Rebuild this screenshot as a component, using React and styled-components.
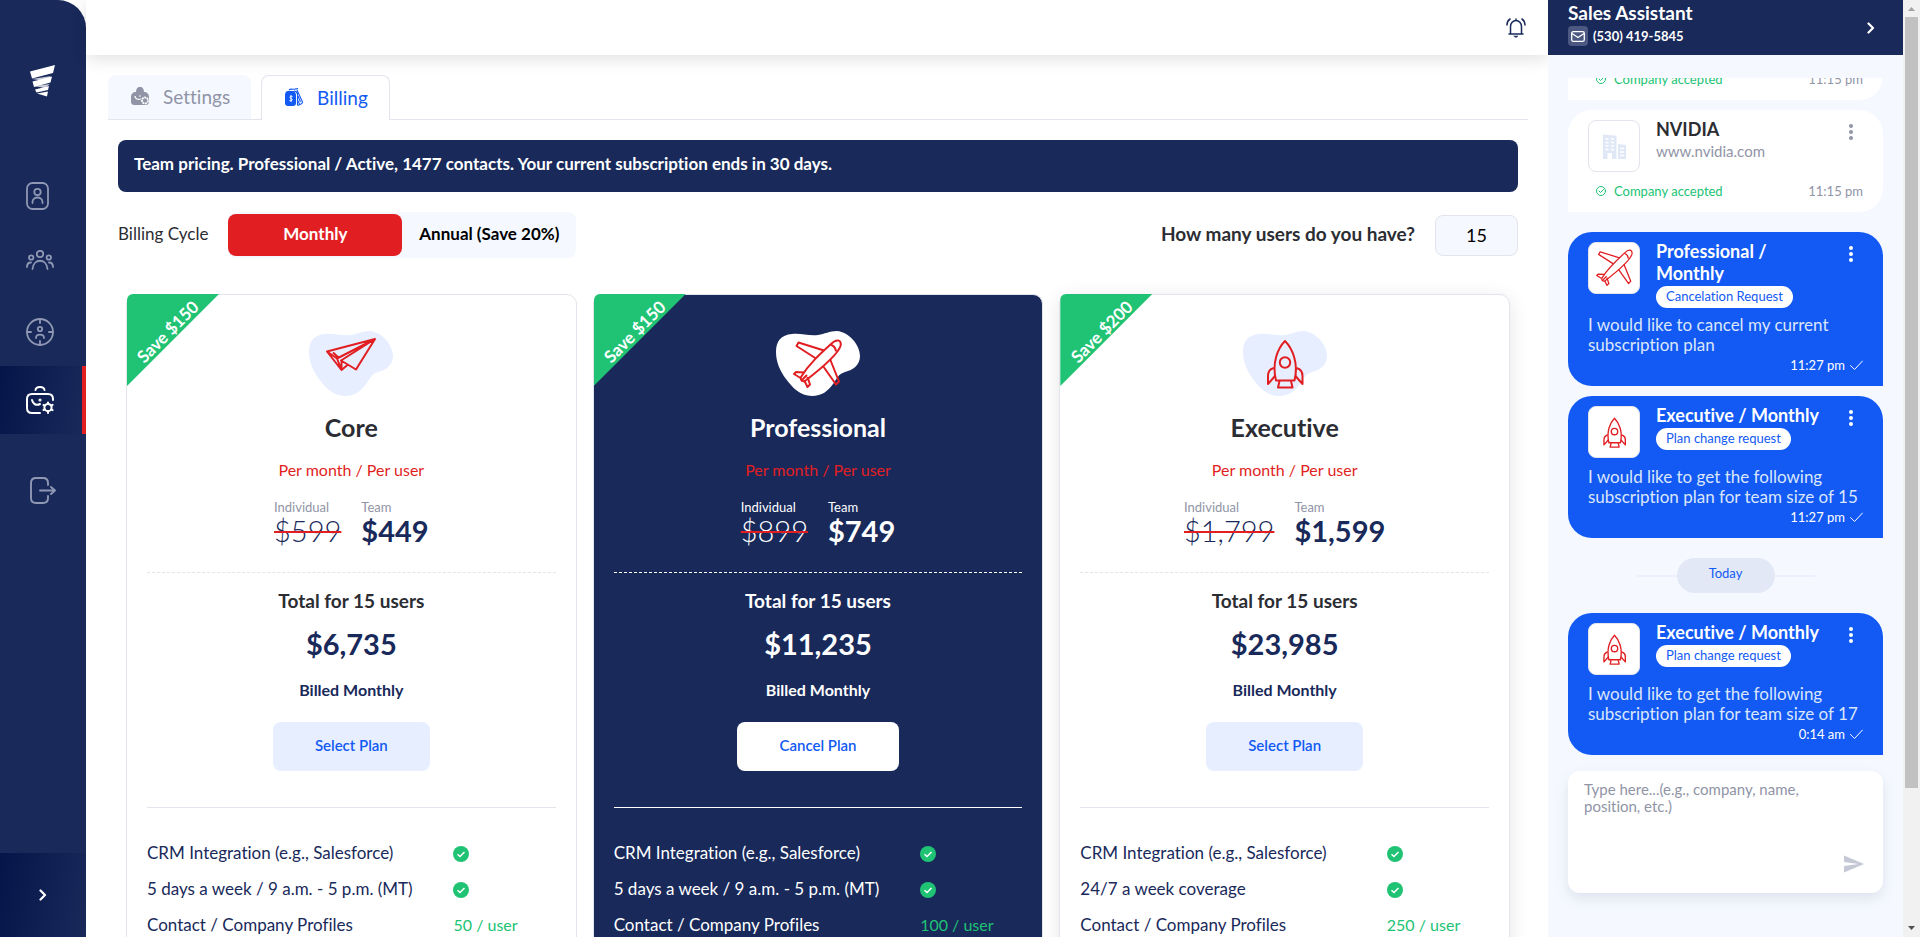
import React, { useState } from "react";
import styled, { createGlobalStyle, css } from "styled-components";

const NAVY = "#18295a";
const BLUE = "#125af3";
const RED = "#e11f22";
const GREEN = "#20c374";
const GREY = "#9094a6";
const INK = "#2b2d33";
const LINE = "#e3e4ec";
const PALE = "#f5f9ff";

const GlobalStyle = createGlobalStyle`
  * { box-sizing: border-box; }
  body { margin: 0; background: #fff; font-variant-ligatures: none; }
  body, button, input, textarea { font-family: Lato, "Open Sans", sans-serif; }
  h1, h2, h3, p, ul, dl, dd { margin: 0; padding: 0; font-weight: inherit; font-size: inherit; }
  button, textarea { font-variant-ligatures: none; }
  button { border: 0; padding: 0; background: none; color: inherit; cursor: pointer; }
  a { text-decoration: none; color: inherit; }
  svg { display: block; flex: none; }
`;

/* ---------- shell ---------- */

const Shell = styled.div`
  display: flex;
  height: 100vh;
  overflow: hidden;
`;

const Sidebar = styled.nav`
  display: flex;
  flex-direction: column;
  flex: none;
  width: 86px;
  background: ${NAVY};
  border-radius: 0 28px 0 0;
  overflow: hidden;
`;

const LogoLink = styled.a`
  height: 162px;
  padding: 65px 0 0 30px;
`;

const NavLink = styled.a`
  display: flex;
  align-items: center;
  height: 68px;
  padding-left: 26px;
  color: #8f98b3;
  ${(p) =>
    p.$active &&
    css`
      color: #fff;
      background: linear-gradient(100deg, #061549, ${NAVY});
      border-right: 4px solid ${RED};
    `}
  ${(p) =>
    p.$last &&
    css`
      margin-top: 22px;
      padding-left: 30px;
    `}
`;

const ExpandButton = styled.button`
  display: flex;
  align-items: center;
  justify-content: center;
  height: 84px;
  margin-top: auto;
  color: #fff;
  background: linear-gradient(100deg, #061549, ${NAVY});
`;

const Main = styled.main`
  flex: 1;
  min-width: 0;
  display: flex;
  flex-direction: column;
`;

const TopBar = styled.header`
  display: flex;
  flex: none;
  align-items: center;
  justify-content: flex-end;
  height: 55px;
  padding-right: 22px;
  background: #fff;
  color: ${NAVY};
  box-shadow: 0 4px 16px rgba(0, 0, 0, 0.12);
`;

const Content = styled.div`
  flex: 1;
  min-height: 0;
  overflow: hidden;
  padding: 20px 20px 0 22px;
`;

/* ---------- tabs ---------- */

const Tabs = styled.div`
  display: flex;
  gap: 10px;
  border-bottom: 1px solid ${LINE};
`;

const Tab = styled.button`
  display: flex;
  align-items: center;
  gap: 14px;
  height: 44px;
  padding: 0 21px 2px 23px;
  border-radius: 8px 8px 0 0;
  background: ${PALE};
  color: ${GREY};
  font-size: 19px;
  ${(p) =>
    p.$active &&
    css`
      height: 45px;
      margin-bottom: -1px;
      background: #fff;
      color: ${BLUE};
      border: 1px solid ${LINE};
      border-bottom: 0;
    `}
`;

/* ---------- billing ---------- */

const Billing = styled.section`
  padding: 20px 10px 0;
`;

const Banner = styled.p`
  padding: 12px 16px 16px;
  border-radius: 8px;
  background: ${NAVY};
  color: #fff;
  font-size: 17px;
  line-height: 24px;
  font-weight: 700;
`;

const Options = styled.div`
  display: flex;
  align-items: center;
  justify-content: space-between;
  margin-top: 20px;
`;

const Cycle = styled.div`
  display: flex;
  align-items: center;
  gap: 20px;
  color: ${INK};
  font-size: 17px;
`;

const Caption = styled.span`
  padding-bottom: 4px;
`;

const Toggle = styled.div`
  display: flex;
  align-items: center;
  height: 46px;
  border-radius: 8px;
  background: ${PALE};
`;

const ToggleButton = styled.button`
  height: 42px;
  width: 174px;
  padding-bottom: 3px;
  border-radius: 8px;
  font-size: 17px;
  font-weight: 700;
  color: ${(p) => (p.$on ? "#fff" : "#000")};
  background: ${(p) => (p.$on ? RED : "transparent")};
`;

const Users = styled.label`
  display: flex;
  align-items: center;
  gap: 20px;
  color: ${INK};
  font-size: 19px;
  font-weight: 700;
`;

const UsersInput = styled.input`
  width: 83px;
  height: 41px;
  border: 1px solid ${LINE};
  border-radius: 8px;
  background: ${PALE};
  font-size: 18px;
  text-align: center;
`;

const Plans = styled.div`
  display: grid;
  grid-template-columns: repeat(3, 1fr);
  gap: 16px;
  padding: 36px 8px 0;
`;

const PlanCard = styled.article`
  position: relative;
  display: flex;
  flex-direction: column;
  align-items: center;
  padding: 36px 20px 40px;
  border: 1px solid ${LINE};
  border-radius: 10px;
  background: ${(p) => (p.$dark ? NAVY : "#fff")};
  color: ${(p) => (p.$dark ? "#fff" : NAVY)};
  box-shadow: ${(p) => (p.$raised ? "0 4px 20px rgba(0, 0, 0, 0.1)" : "none")};
  --ink: ${(p) => (p.$dark ? "#fff" : INK)};
  --muted: ${(p) => (p.$dark ? "#fff" : GREY)};
  --line: ${(p) => (p.$dark ? "#fff" : LINE)};
`;

const Ribbon = styled.div`
  position: absolute;
  top: -1px;
  left: 0;
  width: 92px;
  height: 92px;
  display: flex;
  align-items: center;
  justify-content: center;
  padding: 0 10px 18px 0;
  border-top-left-radius: 6px;
  background: ${GREEN};
  clip-path: polygon(0 0, 100% 0, 0 100%);
  color: #fff;
  font-size: 17px;
  font-weight: 700;
  white-space: nowrap;

  span { transform: rotate(-45deg); }
`;

const PlanName = styled.h2`
  margin-top: 15px;
  font-size: 25px;
  line-height: 32px;
  font-weight: 700;
  color: var(--ink);
`;

const Per = styled.p`
  margin-top: 15px;
  font-size: 16px;
  line-height: 24px;
  color: ${RED};
`;

const Prices = styled.dl`
  display: flex;
  gap: 20px;
  margin-top: 17px;

  dt {
    font-size: 13px;
    line-height: 16px;
    color: var(--muted);
  }
`;

const Price = styled.dd`
  font-size: 29px;
  line-height: 32px;
  font-weight: ${(p) => (p.$old ? 300 : 700)};
  ${(p) => p.$old && css`text-decoration: line-through 2px ${RED};`}
`;

const Rule = styled.hr`
  align-self: stretch;
  width: 100%;
  margin: ${(p) => (p.$dashed ? "25px 0 0" : "36px 0 28px")};
  border: 0;
  border-top: 1px ${(p) => (p.$dashed ? "dashed" : "solid")} var(--line);
`;

const TotalLabel = styled.p`
  margin-top: 16px;
  font-size: 19px;
  line-height: 24px;
  font-weight: 700;
  color: var(--ink);
`;

const Total = styled.p`
  margin-top: 14px;
  font-size: 29px;
  line-height: 34px;
  font-weight: 700;
`;

const Billed = styled.p`
  margin: 17px 0 20px;
  font-size: 16px;
  line-height: 24px;
  font-weight: 700;
`;

const PlanButton = styled.button`
  height: 49px;
  padding: 0 42px 4px;
  border-radius: 8px;
  background: ${(p) => (p.$dark ? "#fff" : "#e7eeff")};
  color: ${BLUE};
  font-size: 15px;
  font-weight: 600;
`;

const Features = styled.ul`
  align-self: stretch;
  list-style: none;
`;

const Feature = styled.li`
  display: grid;
  grid-template-columns: 3fr 1fr;
  align-items: center;
  height: 36px;
  font-size: 17px;

  span { padding-bottom: 3px; }
`;

const Amount = styled.span`
  font-size: 16px;
  color: ${GREEN};
`;

/* ---------- assistant ---------- */

const Assistant = styled.aside`
  display: flex;
  flex-direction: column;
  flex: none;
  width: 355px;
  background: ${PALE};
  z-index: 1;
`;

const AssistantHead = styled.header`
  display: flex;
  align-items: center;
  justify-content: space-between;
  height: 55px;
  padding: 0 28px 0 20px;
  background: ${NAVY};
  color: #fff;

  h2 {
    font-size: 19px;
    line-height: 26px;
    font-weight: 700;
  }
`;

const Phone = styled.a`
  display: flex;
  align-items: center;
  gap: 5px;
  padding-bottom: 9px;
  font-size: 13px;
  line-height: 18px;
  font-weight: 700;
`;

const MailBox = styled.span`
  display: flex;
  align-items: center;
  justify-content: center;
  width: 20px;
  height: 20px;
  border-radius: 4px;
  background: #4c5880;
`;

const ChatBody = styled.div`
  display: flex;
  flex-direction: column;
  flex: 1;
  min-height: 0;
  padding: 23px 20px 44px;
`;

const Messages = styled.div`
  display: flex;
  flex-direction: column;
  justify-content: flex-end;
  flex: 1;
  min-height: 0;
  gap: 10px;
  overflow: hidden;
`;

const CompanyCard = styled.article`
  flex: none;
  padding: 10px 20px;
  border-radius: ${(p) => (p.$tail ? "0 0 24px 0" : "24px 24px 24px 0")};
  background: #fff;
`;

const RequestCard = styled.article`
  flex: none;
  margin-top: ${(p) => (p.$first ? "10px" : "0")};
  padding: 10px 20px 11px;
  border-radius: 24px 24px 0 24px;
  background: ${BLUE};
  color: #fff;
`;

const CardHead = styled.div`
  display: flex;
  align-items: flex-start;
  min-height: 54px;
  margin-bottom: 7px;
`;

const Thumb = styled.div`
  display: flex;
  align-items: center;
  justify-content: center;
  flex: none;
  width: 52px;
  height: 52px;
  border: 1px solid ${LINE};
  border-radius: 8px;
  background: #fff;
`;

const CardTitle = styled.div`
  flex: 1;
  padding: 0 8px 0 16px;
  font-size: 18px;
  line-height: 22px;
  font-weight: 700;
  color: ${(p) => (p.$ink ? INK : "#fff")};

  h3 { margin-top: -2px; padding-bottom: 2px; }

  a {
    display: block;
    font-size: 15px;
    line-height: 18px;
    font-weight: 400;
    color: ${GREY};
  }
`;

const Tag = styled.span`
  display: table;
  padding: 0 10px 2px;
  border-radius: 11px;
  background: #fff;
  color: ${BLUE};
  font-size: 13px;
  line-height: 20px;
  font-weight: 400;
`;

const MenuButton = styled.button`
  padding: 4px 10px 0 9px;
  color: ${(p) => (p.$light ? "#fff" : GREY)};
`;

const CompanyFoot = styled.div`
  display: flex;
  align-items: center;
  gap: 8px;
  padding: 0 0 1px 8px;
  font-size: 13px;
  line-height: 20px;
  color: ${GREEN};

  time {
    margin-left: auto;
    color: ${GREY};
  }
`;

const Note = styled.p`
  font-size: 17px;
  line-height: 20px;
  color: #dbe6fb;
`;

const Sent = styled.div`
  display: flex;
  align-items: center;
  justify-content: flex-end;
  gap: 5px;
  font-size: 13px;
  line-height: 20px;
`;

const DayRow = styled.div`
  display: flex;
  align-items: center;
  justify-content: center;
  flex: none;
  margin: 10px 0;

  &::before, &::after {
    content: "";
    width: 40px;
    height: 2px;
    background: #ebf0fc;
  }
`;

const Day = styled.span`
  width: 98px;
  border-radius: 18px;
  background: #e2e8f6;
  color: ${BLUE};
  font-size: 13px;
  line-height: 31px;
  padding-bottom: 4px;
  text-align: center;
`;

const Composer = styled.form`
  display: flex;
  flex-direction: column;
  align-items: flex-end;
  flex: none;
  height: 122px;
  margin-top: 16px;
  padding: 10px 19px 20px 16px;
  border-radius: 12px;
  background: #fff;
  box-shadow: 0 6px 14px rgba(24, 41, 90, 0.1);
`;

const ComposerText = styled.textarea`
  flex: 1;
  align-self: stretch;
  padding: 0 50px 0 0;
  border: 0;
  outline: 0;
  resize: none;
  background: none;
  font-size: 15px;
  line-height: 17px;
  overflow: hidden;

  &::placeholder { color: ${GREY}; opacity: 1; }
`;

const ScrollRail = styled.div`
  display: flex;
  flex-direction: column;
  align-items: center;
  justify-content: space-between;
  flex: none;
  width: 17px;
  padding: 7px 0;
  background: #f1f1f1;
`;

const ScrollThumb = styled.div`
  width: 13px;
  height: 83.5%;
  margin: 6px 0 auto;
  background: #c1c1c1;
`;

/* ---------- icons ---------- */

const Stroke = ({ w, h, width = 1.8, children }) => (
  <svg width={w} height={h} viewBox={`0 0 ${w} ${h}`} fill="none" stroke="currentColor" strokeWidth={width} strokeLinecap="round" strokeLinejoin="round" aria-hidden="true">
    {children}
  </svg>
);

const Logo = () => (
  <svg width="25" height="32" viewBox="0 0 25 32" aria-hidden="true">
    <path d="M2 14l19-3-6 5zM4 21l16-2-5 4z" fill="#c9ccd6" />
    <path d="M0 6.500L25 0l-2 8L2 13.500zM2.500 16.500L22 11.500l-1.500 6L4 22zM5 24.500l14-3.500-1 4L6.500 27.500zM7 28.500l11-2-1 5z" fill="#fff" />
  </svg>
);

const ContactIcon = () => (
  <Stroke w={23} h={28}>
    <rect x="1" y="1" width="21" height="26" rx="5.500" />
    <circle cx="11.500" cy="10" r="3.200" />
    <path d="M6.500 21v-1c0-6 10-6 10 0v1" />
  </Stroke>
);

const GroupIcon = () => (
  <Stroke w={28} h={28}>
    <circle cx="14" cy="4" r="3.200" />
    <circle cx="5.200" cy="7.500" r="2.200" />
    <circle cx="22.800" cy="7.500" r="2.200" />
    <path d="M6.500 19c1-11 14-11 15 0M1 17c0-3 1.500-4.500 4-4.500M27 17c0-3-1.500-4.500-4-4.500" />
  </Stroke>
);

const TargetIcon = () => (
  <Stroke w={28} h={28}>
    <circle cx="14" cy="14" r="13" />
    <path d="M14 1v4M14 23v4M1 14h4M23 14h4M10 20c0-4.500 8-4.500 8 0" />
    <circle cx="14" cy="11" r="2.200" />
  </Stroke>
);

const BriefcaseIcon = () => (
  <Stroke w={28} h={28} width={2}>
    <path d="M9.500 4c.5-4 8.500-4 9 0M27 14v-1c0-4-2-5-5-5H6c-3 0-5 1.500-5 5v9c0 3.500 2 5 5 5h8M6 14c1 4 4 6 8 4" />
    <circle cx="14" cy="14" r=".6" />
    <circle cx="22" cy="21.500" r="3.600" />
    <path d="M22 16.500v1M22 25.500v1.500M17.500 19l1.200.6M25.300 23.500l1.300.6M17.500 24l1.200-.6M25.300 19.500l1.300-.6" />
  </Stroke>
);

const ExitIcon = () => (
  <Stroke w={26} h={27} width={1.900}>
    <path d="M18 8V6c0-3-2-5-5-5H6C3 1 1 3 1 6v15c0 3 2 5 5 5h7c3 0 5-2 5-5v-2M10 13.500h15M21 10l4 3.500-4 3.500" />
  </Stroke>
);

const Chevron = () => (
  <Stroke w={8} h={12} width={2.200}>
    <path d="M1.500 1.500L6 6l-4.500 4.500" />
  </Stroke>
);

const BellIcon = () => (
  <Stroke w={20} h={20} width={1.500}>
    <path d="M3 16h14M4.500 16V8.500a5.500 6 0 0 1 11 0V16M10 1v1.500M4 1C2 2.300 1 4.200 1 7M16 1c2 1.300 3 3.200 3 6" />
    <path d="M8 18h4l-2 1.500z" fill="currentColor" strokeWidth=".5" />
  </Stroke>
);

const SettingsTabIcon = () => (
  <svg width="18" height="18" viewBox="0 0 18 18" aria-hidden="true">
    <path d="M5 5c0-7 8-7 8 0 3 0 5 2 5 5v4c0 3-1 4-4 4H4c-3 0-4-1-4-4v-4c0-3 2-5 5-5z" fill={GREY} />
    <path d="M4 9c0 3 3 4 6 3" fill="none" stroke="#fff" strokeWidth="1.300" />
    <circle cx="9" cy="9" r=".8" fill="#fff" />
    <circle cx="14" cy="13.500" r="3" fill={GREY} stroke="#fff" strokeWidth="1.800" strokeDasharray="2 .6" />
  </svg>
);

const BillingTabIcon = () => (
  <svg width="18" height="18" viewBox="0 0 18 18" fill="none" stroke={BLUE} aria-hidden="true">
    <path d="M3 3h5c2 0 3 2 3 5v7c0 2-1 3-3 3H3c-2 0-3-1-3-3V7c0-2 1-4 3-4z" fill={BLUE} stroke="none" />
    <path d="M4 2c2-2 4 0 6-1 1 0 2 0 3-.5M12 2l5.500 12c0 2-2 2.500-5 3.500M12.500 5v12M13 8l2.500 6M9 3c2 0 3 1 3.500 3M12.500 12l2 4" strokeWidth="1.100" />
    <path d="M7.500 8.500c-3-1-3 1.500-1.500 2 2 .5 1.500 3-1.500 2M6 7v7" stroke="#fff" />
  </svg>
);

const Blob = ({ fill }) => (
  <path fill={fill} d="M0 21C0 10 5 4 16 3c9-1 16 2 26 1 7-1 11-4 19-4 12 1 23 14 23 25 0 9-7 14-15 16-7 2-8 7-12 12-5 7-11 12-21 12-12 0-20-9-26-17C4 40 0 31 0 21z" />
);

const drawings = {
  paper: <path d="M18 20.500L66 8 47 38.500 32 29.500 66 8 28 27.500zL32.500 39V29.500M28 27.500l4.500 11.500 6-5M24 21.500l5.500 5" />,
  jet: (
    <>
      <path d="M25 46C33 33 44 23 55 13c5-5 11-5 9.500 2C62 23 42 40 29 50c-3 1-5-1-4-4z" />
      <path d="M48 19.500L22.500 11.500 20.500 15 40 27.500M54 28l9 22.500-3 3L47 35M54.500 13.500c3 1 5 3 5.500 7M28 41.500L20 41l-2 2 6.500 4M31.500 46l2.500 7.500-2.500 2.500-3-6M26 49l5-5" />
    </>
  ),
  rocket: (
    <>
      <path d="M42 10C35 17 28.500 32 33 49.500h18.500C56 32 49 17 42 10z" />
      <circle cx="42" cy="31.500" r="5.200" />
      <path d="M31 37c-4 1-6 4-6 8v8l7-8M53.500 37c4 1 6 4 6 8v8l-7-8M36.500 50l-1.500 6.500h14.500L48 50" />
    </>
  ),
};

const PlanArt = ({ kind, fill }) => (
  <svg width="84" height="65" viewBox="0 0 84 65" aria-hidden="true">
    <Blob fill={fill} />
    <g fill="none" stroke={RED} strokeWidth="2" strokeLinejoin="round">{drawings[kind]}</g>
  </svg>
);

const ThumbArt = ({ kind }) => {
  const jet = kind === "jet";
  return (
    <svg width={jet ? 37 : 23} height={jet ? 38 : 31} viewBox={jet ? "17 8 49 50" : "23.500 8 37 50"} fill="none" stroke={RED} strokeWidth={jet ? 1.700 : 2.200} strokeLinejoin="round" aria-hidden="true">
      {drawings[kind]}
    </svg>
  );
};

const CheckBadge = () => (
  <svg width="16" height="16" viewBox="0 0 16 16" aria-label="Included" role="img">
    <circle cx="8" cy="8" r="8" fill={GREEN} />
    <path d="M4.500 8.200l2.500 2.300 4.500-4.500" fill="none" stroke="#fff" strokeWidth="1.500" />
  </svg>
);

const BuildingIcon = () => (
  <svg width="25" height="25" viewBox="0 0 25 25" aria-hidden="true">
    <path d="M1 .5l13.500 1.300V25H10v-6H5.500v6H1zM16 10l8 1v14h-8z" fill="#e0e7f6" />
    <path d="M3.500 5h3M9 5h3M3.500 8.500h3M9 8.500h3M3.500 12h3M9 12h3M3.500 15.500h3M9 15.500h3M18 14.500h4M18 18h4M18 21.500h4" stroke="#fff" strokeWidth="1.300" />
  </svg>
);

const Dots = () => (
  <svg width="4" height="16" viewBox="0 0 4 16" fill="currentColor" aria-hidden="true">
    <circle cx="2" cy="2" r="2" />
    <circle cx="2" cy="8" r="2" />
    <circle cx="2" cy="14" r="2" />
  </svg>
);

/* ---------- data ---------- */

const coverage = "5 days a week / 9 a.m. - 5 p.m. (MT)";

const plans = [
  { name: "Core", art: "paper", save: "$150", price: 599, team: 449, hours: coverage, profiles: 50 },
  { name: "Professional", art: "jet", save: "$150", price: 899, team: 749, hours: coverage, profiles: 100, current: true },
  { name: "Executive", art: "rocket", save: "$200", price: 1799, team: 1599, hours: "24/7 a week coverage", profiles: 250, raised: true },
];

const money = (n) => "$" + n.toLocaleString("en-US");

/* ---------- parts ---------- */

const Plan = ({ plan, users }) => (
  <PlanCard $dark={plan.current} $raised={plan.raised}>
    <Ribbon><span>Save {plan.save}</span></Ribbon>
    <PlanArt kind={plan.art} fill={plan.current ? "#fff" : "#e7eeff"} />
    <PlanName>{plan.name}</PlanName>
    <Per>Per month / Per user</Per>
    <Prices>
      <div>
        <dt>Individual</dt>
        <Price $old>{money(plan.price)}</Price>
      </div>
      <div>
        <dt>Team</dt>
        <Price>{money(plan.team)}</Price>
      </div>
    </Prices>
    <Rule $dashed />
    <TotalLabel>Total for {users} users</TotalLabel>
    <Total>{money(plan.team * users)}</Total>
    <Billed>Billed Monthly</Billed>
    <PlanButton $dark={plan.current}>{plan.current ? "Cancel Plan" : "Select Plan"}</PlanButton>
    <Rule />
    <Features>
      <Feature><span>CRM Integration (e.g., Salesforce)</span><CheckBadge /></Feature>
      <Feature><span>{plan.hours}</span><CheckBadge /></Feature>
      <Feature><span>Contact / Company Profiles</span><Amount>{plan.profiles} / user</Amount></Feature>
    </Features>
  </PlanCard>
);

const Company = ({ tail }) => (
  <CompanyCard $tail={tail}>
    {!tail && (
      <CardHead>
        <Thumb><BuildingIcon /></Thumb>
        <CardTitle $ink>
          <h3>NVIDIA</h3>
          <a href="#company">www.nvidia.com</a>
        </CardTitle>
        <MenuButton aria-label="More"><Dots /></MenuButton>
      </CardHead>
    )}
    <CompanyFoot>
      <Stroke w={10} h={10} width={1}>
        <circle cx="5" cy="5" r="4.500" />
        <path d="M3 5l1.500 1.500L7.500 3.500" />
      </Stroke>
      Company accepted
      <time>11:15 pm</time>
    </CompanyFoot>
  </CompanyCard>
);

const Request = ({ title, tag, art, text, time, first }) => (
  <RequestCard $first={first}>
    <CardHead>
      <Thumb><ThumbArt kind={art} /></Thumb>
      <CardTitle>
        <h3>{title}</h3>
        <Tag>{tag}</Tag>
      </CardTitle>
      <MenuButton $light aria-label="More"><Dots /></MenuButton>
    </CardHead>
    <Note>{text}</Note>
    <Sent>
      <time>{time}</time>
      <Stroke w={13} h={10} width={1}><path d="M.5 5.500L4.500 9.500 12.500 1" /></Stroke>
    </Sent>
  </RequestCard>
);

const App = () => {
  const [cycle, setCycle] = useState("monthly");
  const [users, setUsers] = useState(15);

  return (
    <>
      <GlobalStyle />
      <Shell>
        <Sidebar>
          <LogoLink href="#home" aria-label="Home"><Logo /></LogoLink>
          <NavLink href="#contacts" aria-label="Contacts"><ContactIcon /></NavLink>
          <NavLink href="#teams" aria-label="Teams"><GroupIcon /></NavLink>
          <NavLink href="#targets" aria-label="Targets"><TargetIcon /></NavLink>
          <NavLink href="#account" aria-label="Account" $active><BriefcaseIcon /></NavLink>
          <NavLink href="#logout" aria-label="Log out" $last><ExitIcon /></NavLink>
          <ExpandButton aria-label="Expand menu"><Chevron /></ExpandButton>
        </Sidebar>

        <Main>
          <TopBar>
            <button aria-label="Notifications"><BellIcon /></button>
          </TopBar>
          <Content>
            <Tabs>
              <Tab><SettingsTabIcon />Settings</Tab>
              <Tab $active><BillingTabIcon />Billing</Tab>
            </Tabs>
            <Billing>
              <Banner>Team pricing. Professional / Active, 1477 contacts. Your current subscription ends in 30 days.</Banner>
              <Options>
                <Cycle>
                  <Caption>Billing Cycle</Caption>
                  <Toggle>
                    <ToggleButton $on={cycle === "monthly"} onClick={() => setCycle("monthly")}>Monthly</ToggleButton>
                    <ToggleButton $on={cycle === "annual"} onClick={() => setCycle("annual")}>Annual (Save 20%)</ToggleButton>
                  </Toggle>
                </Cycle>
                <Users>
                  <Caption>How many users do you have?</Caption>
                  <UsersInput value={users} onChange={(e) => setUsers(Number(e.target.value) || 0)} />
                </Users>
              </Options>
              <Plans>
                {plans.map((plan) => <Plan key={plan.name} plan={plan} users={users} />)}
              </Plans>
            </Billing>
          </Content>
        </Main>

        <Assistant>
          <AssistantHead>
            <div>
              <h2>Sales Assistant</h2>
              <Phone href="tel:5304195845">
                <MailBox>
                  <Stroke w={14} h={11} width={1.300}>
                    <rect x=".7" y=".7" width="12.600" height="9.600" rx="1.500" />
                    <path d="M1 2.500l6 4 6-4" />
                  </Stroke>
                </MailBox>
                (530) 419-5845
              </Phone>
            </div>
            <button aria-label="Collapse"><Chevron /></button>
          </AssistantHead>
          <ChatBody>
            <Messages>
              <Company tail />
              <Company />
              <Request first title="Professional / Monthly" tag="Cancelation Request" art="jet" text="I would like to cancel my current subscription plan" time="11:27 pm" />
              <Request title="Executive / Monthly" tag="Plan change request" art="rocket" text="I would like to get the following subscription plan for team size of 15" time="11:27 pm" />
              <DayRow><Day>Today</Day></DayRow>
              <Request title="Executive / Monthly" tag="Plan change request" art="rocket" text="I would like to get the following subscription plan for team size of 17" time="0:14 am" />
            </Messages>
            <Composer>
              <ComposerText aria-label="Message" placeholder="Type here...(e.g., company, name, position, etc.)" />
              <button type="button" aria-label="Send">
                <svg width="20" height="18" viewBox="2 3 21 18" fill="#c5c9d6" aria-hidden="true">
                  <path d="M2 21L23 12 2 3v7l15 2-15 2z" />
                </svg>
              </button>
            </Composer>
          </ChatBody>
        </Assistant>

        <ScrollRail aria-hidden="true">
          <svg width="7" height="4" viewBox="0 0 7 4"><path d="M0 4h7L3.500 0z" fill="#a3a3a3" /></svg>
          <ScrollThumb />
          <svg width="7" height="4" viewBox="0 0 7 4"><path d="M0 0h7L3.500 4z" fill="#505050" /></svg>
        </ScrollRail>
      </Shell>
    </>
  );
};

export default App;
